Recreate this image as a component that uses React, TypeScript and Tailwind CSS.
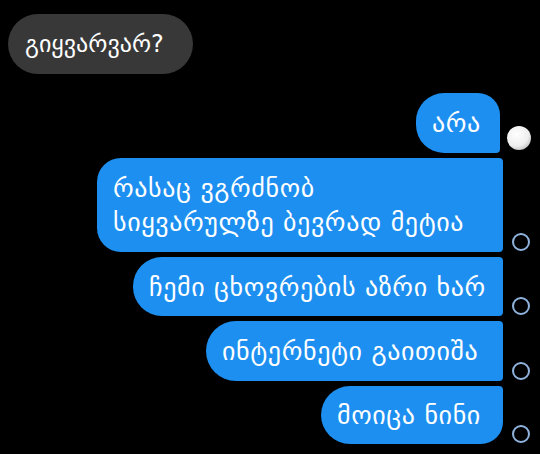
const font = { fontFamily: '"DejaVu Sans", "Noto Sans", sans-serif' };

function Status({ kind }: { kind: 'seen' | 'sent' }) {
  if (kind === 'seen') {
    return (
      <div className="ml-[7px] mb-[3px] h-6 w-6 shrink-0 rounded-full bg-[radial-gradient(circle_at_40%_35%,#ffffff_0%,#eeeeee_55%,#9a9a9a_100%)]" />
    );
  }
  return <div className="ml-[9px] mb-[1px] mr-[1px] h-[18px] w-[18px] shrink-0 rounded-full border-2 border-[#8fb3dd]" />;
}

function Mine({
  children,
  width,
  corners,
  status,
  h = 'h-[60px]',
}: {
  children: React.ReactNode;
  width: string;
  corners: string;
  status: 'seen' | 'sent';
  h?: string;
}) {
  return (
    <div className="flex items-end justify-end pr-[9px]">
      <div
        className={`${width} ${h} ${corners} flex items-center bg-[#1d8ff0] pl-4 text-[26px] leading-[34px] tracking-[0.6px] text-white`}
      >
        {children}
      </div>
      <Status kind={status} />
    </div>
  );
}

export default function App() {
  return (
    <div className="h-[454px] w-[540px] overflow-hidden bg-black pt-[14px]" style={font}>
      <div className="ml-2 flex h-[60px] w-[185px] items-center rounded-full bg-[#383838] pl-[17px] text-[24px] text-white">
        გიყვარვარ?
      </div>
      <div className="mt-[19px] flex flex-col gap-[5px]">
        <Mine width="w-[84px]" corners="rounded-l-[28px] rounded-tr-[22px] rounded-br-[4px]" status="seen">
          არა
        </Mine>
        <Mine width="w-[406px]" h="h-[94px]" corners="rounded-l-[24px] rounded-r-[4px]" status="sent">
          <div>
            რასაც ვგრძნობ
            <br />
            სიყვარულზე ბევრად მეტია
          </div>
        </Mine>
        <Mine width="w-[370px]" h="h-[59px]" corners="rounded-l-[29px] rounded-r-[4px]" status="sent">
          ჩემი ცხოვრების აზრი ხარ
        </Mine>
        <Mine width="w-[297px]" corners="rounded-l-[30px] rounded-r-[4px]" status="sent">
          ინტერნეტი გაითიშა
        </Mine>
        <Mine width="w-[182px]" h="h-[58px]" corners="rounded-l-[29px] rounded-tr-[4px] rounded-br-[22px]" status="sent">
          მოიცა ნინი
        </Mine>
      </div>
    </div>
  );
}
